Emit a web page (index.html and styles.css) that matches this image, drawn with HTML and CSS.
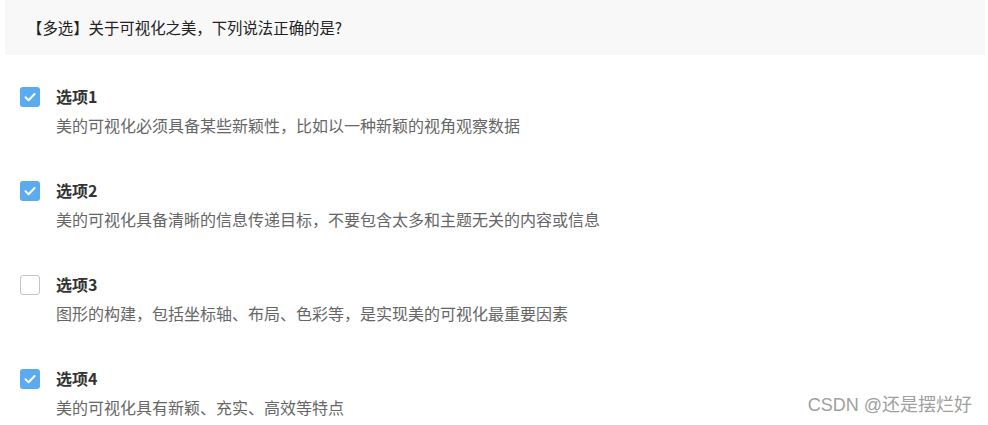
FILE: index.html
```html
<!DOCTYPE html>
<html lang="zh">
<head>
<meta charset="utf-8">
<link rel="stylesheet" href="styles.css">
</head>
<body>
<div class="question">【多选】关于可视化之美，下列说法正确的是?</div>
<div class="options">
  <div class="option">
    <span class="box checked"><svg viewBox="0 0 20 20" width="20" height="20"><path d="M5.5 10.2 L8.6 13.2 L14.6 7" fill="none" stroke="#fff" stroke-width="2" stroke-linecap="round" stroke-linejoin="round"/></svg></span>
    <div class="text"><div class="label">选项1</div><div class="desc">美的可视化必须具备某些新颖性，比如以一种新颖的视角观察数据</div></div>
  </div>
  <div class="option">
    <span class="box checked"><svg viewBox="0 0 20 20" width="20" height="20"><path d="M5.5 10.2 L8.6 13.2 L14.6 7" fill="none" stroke="#fff" stroke-width="2" stroke-linecap="round" stroke-linejoin="round"/></svg></span>
    <div class="text"><div class="label">选项2</div><div class="desc">美的可视化具备清晰的信息传递目标，不要包含太多和主题无关的内容或信息</div></div>
  </div>
  <div class="option">
    <span class="box"></span>
    <div class="text"><div class="label">选项3</div><div class="desc">图形的构建，包括坐标轴、布局、色彩等，是实现美的可视化最重要因素</div></div>
  </div>
  <div class="option">
    <span class="box checked"><svg viewBox="0 0 20 20" width="20" height="20"><path d="M5.5 10.2 L8.6 13.2 L14.6 7" fill="none" stroke="#fff" stroke-width="2" stroke-linecap="round" stroke-linejoin="round"/></svg></span>
    <div class="text"><div class="label">选项4</div><div class="desc">美的可视化具有新颖、充实、高效等特点</div></div>
  </div>
</div>
<div class="watermark">CSDN @还是摆烂好</div>
</body>
</html>
```
FILE: styles.css
```css
html, body {
  margin: 0;
  padding: 0;
  background: #fff;
  font-family: "Microsoft YaHei", "Noto Sans CJK SC", "Liberation Sans", sans-serif;
}
body {
  position: relative;
  width: 988px;
  height: 425px;
  overflow: hidden;
}
.question {
  margin-left: 5px;
  width: 958px;
  height: 55px;
  line-height: 55px;
  padding-left: 22px;
  background: #f8f8f8;
  color: #222;
  font-size: 15.4px;
}
.options {
  padding-left: 20px;
  margin-top: 32px;
  display: flex;
  flex-direction: column;
  gap: 46px;
}
.option {
  display: flex;
  gap: 16px;
  align-items: flex-start;
}
.box {
  width: 20px;
  height: 20px;
  box-sizing: border-box;
  border-radius: 3px;
  border: 1.5px solid #c4c4c4;
  background: #fff;
  flex: none;
  display: block;
}
.box.checked {
  border: none;
  background: #5aabf0;
}
.box svg { display: block; }
.label {
  font-size: 16px;
  font-weight: bold;
  color: #333;
  line-height: 19px;
}
.desc {
  margin-top: 9px;
  font-size: 16px;
  color: #666;
  line-height: 20px;
}
.watermark {
  position: absolute;
  right: 16px;
  bottom: 9px;
  font-size: 18px;
  color: #a0a0a0;
  font-family: "Liberation Sans", "Noto Sans CJK SC", sans-serif;
}
```
